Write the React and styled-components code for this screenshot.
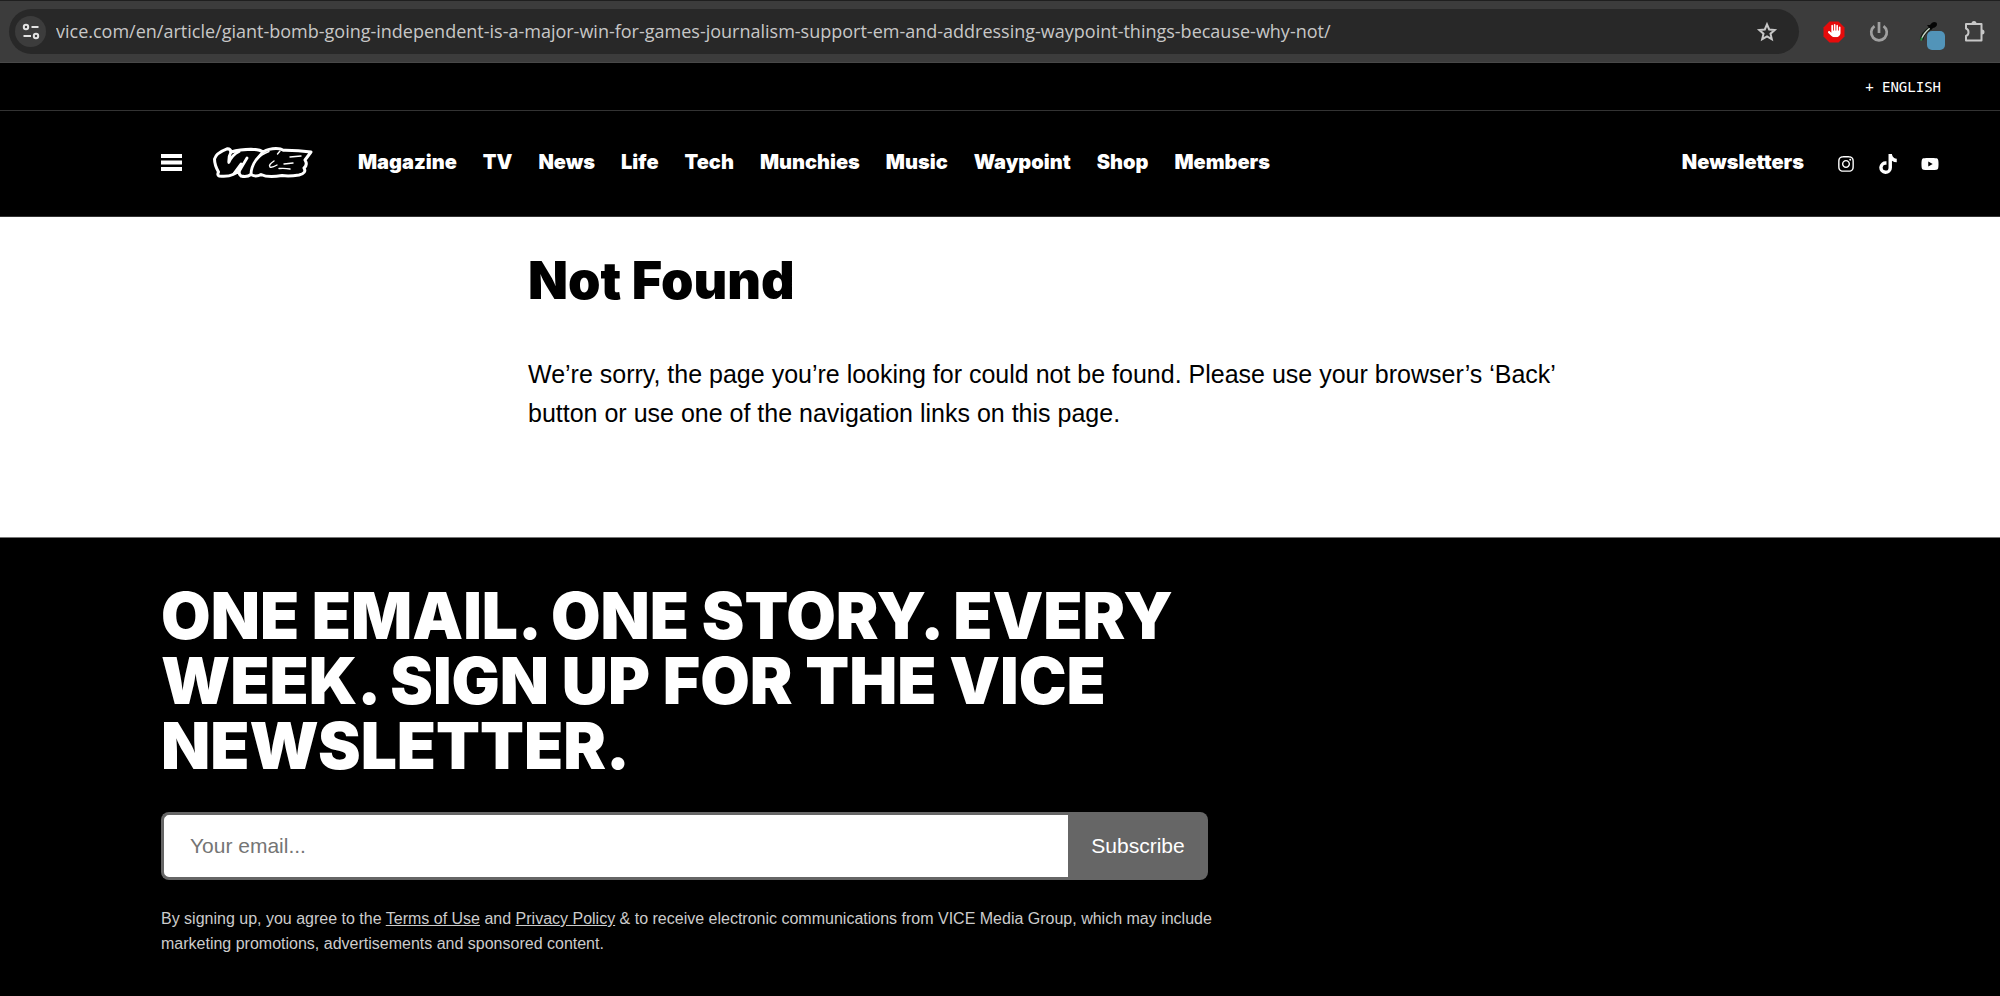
import React, { useState } from 'react';
import styled, { createGlobalStyle } from 'styled-components';
import { FaInstagram, FaTiktok, FaYoutube } from 'react-icons/fa';
import { FaHand } from 'react-icons/fa6';

const GlobalStyle = createGlobalStyle`
  * {
    box-sizing: border-box;
  }

  body {
    margin: 0;
    background: #000;
    color: #000;
    font-family: "Liberation Sans", Arial, sans-serif;
  }

  a {
    color: inherit;
  }
`;

const Page = styled.div`
  display: flex;
  flex-direction: column;
  min-height: 100vh;
`;

/* Browser toolbar */
const Toolbar = styled.div`
  display: flex;
  align-items: center;
  gap: 20px;
  height: 63px;
  padding: 0 10px 0 9px;
  background: #3c3c3c;
  border-top: 1px solid #1f1f1f;
  border-bottom: 1px solid #484848;
`;

const AddressBar = styled.div`
  display: flex;
  flex: 1;
  align-items: center;
  gap: 10px;
  height: 45px;
  padding: 0 20px 0 6px;
  border-radius: 24px;
  background: #282828;
`;

const IconButton = styled.button`
  display: flex;
  align-items: center;
  justify-content: center;
  flex: none;
  width: ${(props) => props.$size || 30}px;
  height: ${(props) => props.$size || 30}px;
  padding: 0;
  border: none;
  border-radius: 50%;
  background: ${(props) => props.$bg || 'none'};
  color: #c7c7c7;
  cursor: pointer;
`;

const UrlInput = styled.input`
  flex: 1;
  min-width: 0;
  padding: 0 0 2px;
  border: none;
  outline: none;
  background: none;
  color: #c7c7c7;
  font-family: "Open Sans", "Noto Sans", sans-serif;
  font-size: 18px;
`;

const Extensions = styled.div`
  display: flex;
  align-items: center;
  gap: 15px;
`;

/* Site header */
const LanguageBar = styled.div`
  display: flex;
  align-items: center;
  justify-content: flex-end;
  height: 48px;
  padding: 0 59px;
  border-bottom: 1px solid #333;
  background: #000;
`;

const LanguageButton = styled.button`
  padding: 0;
  border: none;
  background: none;
  color: #fff;
  font-family: "DejaVu Sans Mono", monospace;
  font-size: 14px;
  cursor: pointer;
`;

const Header = styled.header`
  display: flex;
  align-items: center;
  height: 106px;
  padding: 0 61px 3px 161px;
  border-bottom: 1px solid #333;
  background: #000;
  color: #fff;
`;

const MenuButton = styled.button`
  display: flex;
  padding: 0;
  margin-right: 31px;
  border: none;
  background: none;
  cursor: pointer;
`;

const LogoLink = styled.a`
  display: flex;
  padding-top: 2px;
  margin-right: 45px;
`;

const Nav = styled.nav`
  display: flex;
  flex: 1;
  gap: 26px;
`;

const NavLink = styled.a`
  font-family: Inter, sans-serif;
  font-size: 20px;
  font-weight: 900;
  line-height: 24px;
  text-decoration: none;
`;

const Social = styled.div`
  display: flex;
  align-items: center;
  gap: 23px;
  padding: 3px 0 0 33px;
`;

const SocialLink = styled.a`
  display: flex;
`;

/* Main content */
const Main = styled.main`
  padding: 32px 24px 104px 528px;
  background: #fff;
`;

const Article = styled.article`
  max-width: 1044px;
`;

const PageTitle = styled.h1`
  margin: 0 0 42px;
  font-family: Inter, sans-serif;
  font-size: 52px;
  font-weight: 900;
  line-height: 64px;
`;

const Message = styled.p`
  margin: 0;
  font-size: 25px;
  line-height: 39px;
`;

/* Newsletter */
const Footer = styled.footer`
  flex: 1;
  padding: 45px 161px 40px;
  border-top: 1px solid #777;
  background: #000;
  color: #fff;
`;

const Signup = styled.section`
  max-width: 1060px;
`;

const SignupTitle = styled.h2`
  margin: 0 0 34px;
  font-family: Inter, sans-serif;
  font-size: 64px;
  font-weight: 900;
  line-height: 65px;
  text-transform: uppercase;
`;

const Form = styled.form`
  display: flex;
  height: 68px;
  max-width: 1047px;
  margin-bottom: 26px;
`;

const EmailInput = styled.input`
  flex: 1;
  min-width: 0;
  padding: 0 26px;
  border: 3px solid #666;
  border-right: none;
  border-radius: 8px 0 0 8px;
  background: #fff;
  font-family: inherit;
  font-size: 21px;

  &::placeholder {
    color: #757575;
  }
`;

const SubscribeButton = styled.button`
  width: 140px;
  padding: 0;
  border: none;
  border-radius: 0 8px 8px 0;
  background: #666;
  color: #fff;
  font-family: inherit;
  font-size: 21px;
  cursor: pointer;
`;

const FinePrint = styled.p`
  margin: 0;
  color: #ccc;
  font-size: 16px;
  line-height: 25px;
`;

const links = ['Magazine', 'TV', 'News', 'Life', 'Tech', 'Munchies', 'Music', 'Waypoint', 'Shop', 'Members'];

const SiteInfoIcon = () => (
  <svg width="18" height="18" viewBox="0 0 18 18" fill="none" stroke="#e3e3e3" strokeWidth="2">
    <circle cx="4" cy="4" r="2.2" />
    <path d="M9.500 4h7M1.500 13h7.500" />
    <circle cx="14" cy="13" r="2.2" />
  </svg>
);

const StarIcon = () => (
  <svg width="24" height="24" viewBox="0 0 24 24" fill="none" stroke="#c7c7c7" strokeWidth="2">
    <path d="M12 4.300L14.200 9.500L19.700 10L15.500 13.700L16.800 19.200L12 16.300L7.200 19.200L8.500 13.700L4.300 10L9.800 9.500Z" />
  </svg>
);

const BlockIcon = () => (
  <svg width="22" height="22" viewBox="0 0 22 22">
    <path d="M6.500 0.500h9L21.500 6.500v9L15.500 21.500h-9L0.500 15.500v-9z" fill="#e60b0b" />
    <FaHand x="5" y="3" width="12" height="16" color="#fff" preserveAspectRatio="none" />
  </svg>
);

const PowerIcon = () => (
  <svg width="24" height="24" viewBox="0 0 24 24" fill="none" stroke="#a0a0a0" strokeWidth="2.700">
    <path d="M7.500 6.200a7.800 7.800 0 1 0 9 0M12 2v11" />
  </svg>
);

const PickerIcon = () => (
  <svg width="36" height="36" viewBox="0 0 36 36">
    <rect x="18" y="17" width="18" height="19" rx="5" fill="#5294b9" />
    <path d="M12.500 26q1-7 9-12" fill="none" stroke="#111a11" strokeWidth="3.500" />
    <path d="M13 24q2-5 8-10" fill="none" stroke="#c9d6c9" strokeWidth="1.500" />
    <path d="M12 26.500l1-3" stroke="#2f8f46" strokeWidth="2" />
    <path d="M18 11l4 5 2-2q4-1 4-4 0-2-3-2-2 0-4 3z" fill="#050505" />
  </svg>
);

const PuzzleIcon = () => (
  <svg width="24" height="24" viewBox="0 0 24 24">
    <path
      d="M3 4H18.500V20.500H3V16Q5.500 15 5.500 12.200T3 8.500Z"
      fill="none"
      stroke="#c7c7c7"
      strokeWidth="2"
      strokeLinejoin="round"
    />
    <path d="M8.500 3.500a2.500 2.500 0 0 1 5 0zM19 9.500a2.500 2.500 0 0 1 0 5z" fill="#c7c7c7" />
  </svg>
);

const MenuIcon = () => (
  <svg width="21" height="17" viewBox="0 0 21 17" fill="#fff">
    <rect width="21" height="4" />
    <rect y="6.500" width="21" height="4" />
    <rect y="13" width="21" height="4" />
  </svg>
);

// hand drawn mark: white outline around black letters
const ViceLogo = () => (
  <svg width="100" height="32" viewBox="0 0 100 32" fill="none" stroke="#fff" strokeLinejoin="round" strokeLinecap="round">
    <path
      strokeWidth="3"
      d="M5.500 25Q1.500 18 1.500 12Q3 6 14 1.800Q17.500 1.500 18 5Q27 2.200 38 2.200Q47 2.500 50 5Q56 1.500 63 1.500Q68 1.500 70 3.200Q84 3 98 5L92 13Q95 18 91 21Q94 26 86 28Q76 29.500 69 28.500Q55 31 48 27.500Q43 30.500 38 27.500Q34 30.500 28 29Q26 27.500 26 24.500L20 27.500Q15 30 6 29Q4 28 5.500 25Z"
    />
    <path strokeWidth="2.800" d="M18 5Q15.500 9 15.800 15.500Q19 8 26 4.500M26 24.500L34 11M21 26.500L28 17M38 27.500Q38 20 43 13L50 5" />
    <path strokeWidth="1.400" d="M43 13Q49 7 56 4.500M61 14Q55 18 57 20Q59 21 64 18M67 4L64.500 7M71 17L80 16M66 21.500Q72 21 77 22M77 10L88 9" />
  </svg>
);

const App = () => {
  const [email, setEmail] = useState('');

  return (
    <Page>
      <GlobalStyle />
      <Toolbar>
        <AddressBar>
          <IconButton $size={31} $bg="#3c3c3c" aria-label="View site information">
            <SiteInfoIcon />
          </IconButton>
          <UrlInput
            aria-label="Address"
            readOnly
            value="vice.com/en/article/giant-bomb-going-independent-is-a-major-win-for-games-journalism-support-em-and-addressing-waypoint-things-because-why-not/"
          />
          <IconButton $size={24} aria-label="Bookmark this page"><StarIcon /></IconButton>
        </AddressBar>
        <Extensions>
          <IconButton aria-label="Ad blocker"><BlockIcon /></IconButton>
          <IconButton aria-label="Power"><PowerIcon /></IconButton>
          <IconButton $size={36} aria-label="Color picker"><PickerIcon /></IconButton>
          <IconButton aria-label="Extensions"><PuzzleIcon /></IconButton>
        </Extensions>
      </Toolbar>

      <LanguageBar>
        <LanguageButton>+ ENGLISH</LanguageButton>
      </LanguageBar>
      <Header>
        <MenuButton aria-label="Menu"><MenuIcon /></MenuButton>
        <LogoLink href="#" aria-label="VICE"><ViceLogo /></LogoLink>
        <Nav>
          {links.map((link) => (
            <NavLink key={link} href="#">{link}</NavLink>
          ))}
        </Nav>
        <NavLink href="#">Newsletters</NavLink>
        <Social>
          <SocialLink href="#" aria-label="Instagram"><FaInstagram size={18} /></SocialLink>
          <SocialLink href="#" aria-label="TikTok"><FaTiktok size={20} /></SocialLink>
          <SocialLink href="#" aria-label="YouTube"><FaYoutube size={18} /></SocialLink>
        </Social>
      </Header>

      <Main>
        <Article>
          <PageTitle>Not Found</PageTitle>
          <Message>
            We’re sorry, the page you’re looking for could not be found. Please use your browser’s ‘Back’ button or use one of the navigation links on this page.
          </Message>
        </Article>
      </Main>

      <Footer>
        <Signup>
          <SignupTitle>One email. One story. Every week. Sign up for the VICE newsletter.</SignupTitle>
          <Form onSubmit={(e) => e.preventDefault()}>
            <EmailInput
              type="email"
              aria-label="Your email"
              placeholder="Your email..."
              value={email}
              onChange={(e) => setEmail(e.target.value)}
            />
            <SubscribeButton type="submit">Subscribe</SubscribeButton>
          </Form>
          <FinePrint>
            By signing up, you agree to the <a href="#">Terms of Use</a> and <a href="#">Privacy Policy</a> &amp; to receive electronic communications from VICE Media Group, which may include marketing promotions, advertisements and sponsored content.
          </FinePrint>
        </Signup>
      </Footer>
    </Page>
  );
};

export default App;
